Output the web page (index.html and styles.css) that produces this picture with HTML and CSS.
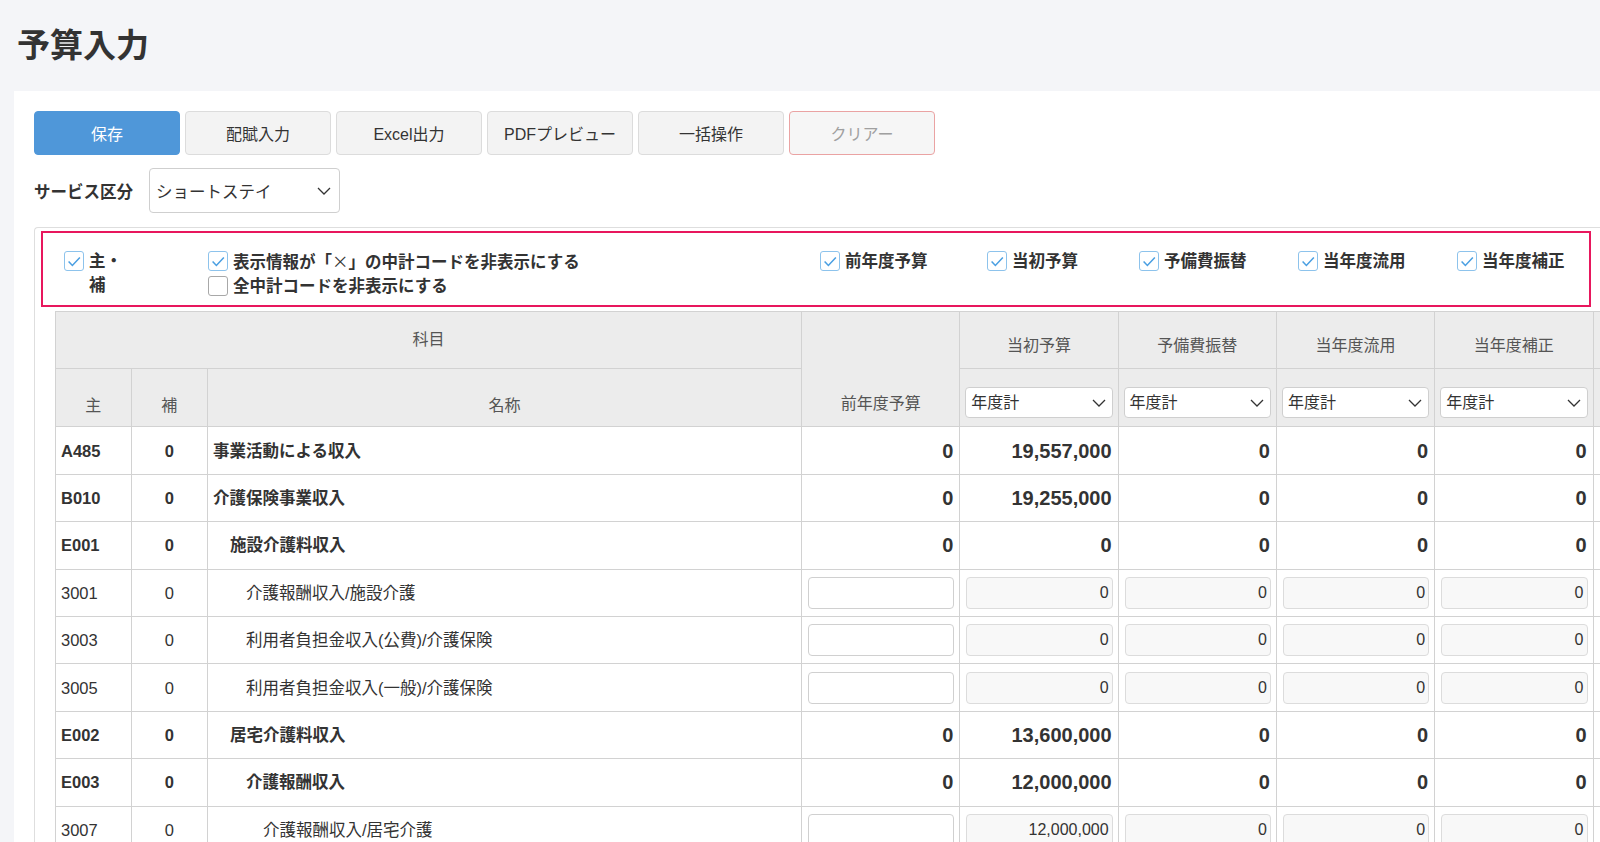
FILE: index.html
```html
<!DOCTYPE html>
<html lang="ja">
<head>
    <meta charset="UTF-8">
    <meta name="viewport" content="width=device-width, initial-scale=1.0">
    <title>予算入力</title>
    <link rel="stylesheet" href="styles.css">
</head>
<body>
    <h1 class="page-title">予算入力</h1>

    <div class="card">
        <div class="toolbar">
            <button class="btn btn-primary">保存</button>
            <button class="btn">配賦入力</button>
            <button class="btn">Excel出力</button>
            <button class="btn">PDFプレビュー</button>
            <button class="btn">一括操作</button>
            <button class="btn btn-clear">クリアー</button>
        </div>

        <div class="service-row">
            <span class="service-label">サービス区分</span>
            <div class="select select-service">
                <span>ショートステイ</span>
                <svg class="chevron" width="14" height="8" viewBox="0 0 14 8"><path d="M1 1 L7 7 L13 1" /></svg>
            </div>
        </div>

        <div class="panel">
            <!-- 表示オプション -->
            <div class="filter-box">
                <label class="check-item">
                    <span class="cb checked"><svg viewBox="0 0 20 20"><path d="M4 10.5 L8.2 15 L16.5 6" /></svg></span>
                    <span class="check-text narrow">主・補</span>
                </label>
                <div class="check-stack">
                    <label class="check-item">
                        <span class="cb checked"><svg viewBox="0 0 20 20"><path d="M4 10.5 L8.2 15 L16.5 6" /></svg></span>
                        <span class="check-text">表示情報が「<span class="wide-x">×</span>」の中計コードを非表示にする</span>
                    </label>
                    <label class="check-item">
                        <span class="cb"></span>
                        <span class="check-text">全中計コードを非表示にする</span>
                    </label>
                </div>
                <label class="check-item">
                    <span class="cb checked"><svg viewBox="0 0 20 20"><path d="M4 10.5 L8.2 15 L16.5 6" /></svg></span>
                    <span class="check-text">前年度予算</span>
                </label>
                <label class="check-item">
                    <span class="cb checked"><svg viewBox="0 0 20 20"><path d="M4 10.5 L8.2 15 L16.5 6" /></svg></span>
                    <span class="check-text">当初予算</span>
                </label>
                <label class="check-item">
                    <span class="cb checked"><svg viewBox="0 0 20 20"><path d="M4 10.5 L8.2 15 L16.5 6" /></svg></span>
                    <span class="check-text">予備費振替</span>
                </label>
                <label class="check-item">
                    <span class="cb checked"><svg viewBox="0 0 20 20"><path d="M4 10.5 L8.2 15 L16.5 6" /></svg></span>
                    <span class="check-text">当年度流用</span>
                </label>
                <label class="check-item">
                    <span class="cb checked"><svg viewBox="0 0 20 20"><path d="M4 10.5 L8.2 15 L16.5 6" /></svg></span>
                    <span class="check-text">当年度補正</span>
                </label>
            </div>

            <table class="budget-table">
                <colgroup>
                    <col class="col-code">
                    <col class="col-sub">
                    <col class="col-name">
                    <col class="col-num">
                    <col class="col-num">
                    <col class="col-num">
                    <col class="col-num">
                    <col class="col-num">
                    <col class="col-num">
                </colgroup>
                <thead>
                    <tr class="head-1">
                        <th colspan="3" class="middle">科目</th>
                        <th rowspan="2">前年度予算</th>
                        <th>当初予算</th>
                        <th>予備費振替</th>
                        <th>当年度流用</th>
                        <th>当年度補正</th>
                        <th></th>
                    </tr>
                    <tr class="head-2">
                        <th>主</th>
                        <th>補</th>
                        <th>名称</th>
                        <th><div class="select select-small"><span>年度計</span><svg class="chevron" width="14" height="8" viewBox="0 0 14 8"><path d="M1 1 L7 7 L13 1" /></svg></div></th>
                        <th><div class="select select-small"><span>年度計</span><svg class="chevron" width="14" height="8" viewBox="0 0 14 8"><path d="M1 1 L7 7 L13 1" /></svg></div></th>
                        <th><div class="select select-small"><span>年度計</span><svg class="chevron" width="14" height="8" viewBox="0 0 14 8"><path d="M1 1 L7 7 L13 1" /></svg></div></th>
                        <th><div class="select select-small"><span>年度計</span><svg class="chevron" width="14" height="8" viewBox="0 0 14 8"><path d="M1 1 L7 7 L13 1" /></svg></div></th>
                        <th></th>
                    </tr>
                </thead>
                <tbody>
                    <tr class="sum">
                        <td>A485</td><td class="c">0</td><td class="name">事業活動による収入</td>
                        <td class="n">0</td><td class="n">19,557,000</td><td class="n">0</td><td class="n">0</td><td class="n">0</td><td></td>
                    </tr>
                    <tr class="sum">
                        <td>B010</td><td class="c">0</td><td class="name">介護保険事業収入</td>
                        <td class="n">0</td><td class="n">19,255,000</td><td class="n">0</td><td class="n">0</td><td class="n">0</td><td></td>
                    </tr>
                    <tr class="sum">
                        <td>E001</td><td class="c">0</td><td class="name lv1">施設介護料収入</td>
                        <td class="n">0</td><td class="n">0</td><td class="n">0</td><td class="n">0</td><td class="n">0</td><td></td>
                    </tr>
                    <tr class="entry">
                        <td>3001</td><td class="c">0</td><td class="name lv2">介護報酬収入/施設介護</td>
                        <td class="i"><input class="num-input" type="text"></td>
                        <td class="i"><input class="num-input" type="text" value="0" readonly></td>
                        <td class="i"><input class="num-input" type="text" value="0" readonly></td>
                        <td class="i"><input class="num-input" type="text" value="0" readonly></td>
                        <td class="i"><input class="num-input" type="text" value="0" readonly></td>
                        <td></td>
                    </tr>
                    <tr class="entry">
                        <td>3003</td><td class="c">0</td><td class="name lv2">利用者負担金収入(公費)/介護保険</td>
                        <td class="i"><input class="num-input" type="text"></td>
                        <td class="i"><input class="num-input" type="text" value="0" readonly></td>
                        <td class="i"><input class="num-input" type="text" value="0" readonly></td>
                        <td class="i"><input class="num-input" type="text" value="0" readonly></td>
                        <td class="i"><input class="num-input" type="text" value="0" readonly></td>
                        <td></td>
                    </tr>
                    <tr class="entry">
                        <td>3005</td><td class="c">0</td><td class="name lv2">利用者負担金収入(一般)/介護保険</td>
                        <td class="i"><input class="num-input" type="text"></td>
                        <td class="i"><input class="num-input" type="text" value="0" readonly></td>
                        <td class="i"><input class="num-input" type="text" value="0" readonly></td>
                        <td class="i"><input class="num-input" type="text" value="0" readonly></td>
                        <td class="i"><input class="num-input" type="text" value="0" readonly></td>
                        <td></td>
                    </tr>
                    <tr class="sum">
                        <td>E002</td><td class="c">0</td><td class="name lv1">居宅介護料収入</td>
                        <td class="n">0</td><td class="n">13,600,000</td><td class="n">0</td><td class="n">0</td><td class="n">0</td><td></td>
                    </tr>
                    <tr class="sum">
                        <td>E003</td><td class="c">0</td><td class="name lv2">介護報酬収入</td>
                        <td class="n">0</td><td class="n">12,000,000</td><td class="n">0</td><td class="n">0</td><td class="n">0</td><td></td>
                    </tr>
                    <tr class="entry">
                        <td>3007</td><td class="c">0</td><td class="name lv3">介護報酬収入/居宅介護</td>
                        <td class="i"><input class="num-input" type="text"></td>
                        <td class="i"><input class="num-input" type="text" value="12,000,000" readonly></td>
                        <td class="i"><input class="num-input" type="text" value="0" readonly></td>
                        <td class="i"><input class="num-input" type="text" value="0" readonly></td>
                        <td class="i"><input class="num-input" type="text" value="0" readonly></td>
                        <td></td>
                    </tr>
                </tbody>
            </table>
        </div>
    </div>
</body>
</html>
```

FILE: styles.css
```css
* {
    margin: 0;
    padding: 0;
    box-sizing: border-box;
}

body {
    font-family: 'Liberation Sans', 'Noto Sans CJK JP', sans-serif;
    background: #f4f5f8;
    color: #333;
    overflow: hidden;
    height: 842px;
}

.page-title {
    font-size: 33px;
    font-weight: bold;
    line-height: 38px;
    padding: 27px 0 0 17px;
    margin-bottom: 26px;
    color: #333;
}

.card {
    background: #fff;
    margin-left: 14px;
    width: 1800px;
    min-height: 800px;
    padding: 20px 0 0 20px;
}

/* ボタン列 */
.toolbar {
    display: flex;
    gap: 5px;
}

.btn {
    width: 146px;
    height: 44px;
    border: 1px solid #dcdcdc;
    border-radius: 4px;
    background: #f3f3f3;
    color: #333;
    font-family: inherit;
    font-size: 16px;
    cursor: pointer;
}

.btn-primary {
    background: #4f97d9;
    border-color: #4f97d9;
    color: #fff;
}

.btn-clear {
    background: #f6f6f6;
    border-color: #eaa3a3;
    color: #a0a0a0;
}

.service-row {
    display: flex;
    align-items: center;
    margin-top: 13px;
}

.service-label {
    font-size: 16.5px;
    font-weight: bold;
    width: 115px;
}

.select {
    display: flex;
    align-items: center;
    justify-content: space-between;
    background: #fff;
    border: 1px solid #cfcfcf;
    border-radius: 4px;
    color: #333;
}

.select-service {
    width: 191px;
    height: 45px;
    padding: 0 8px 0 6px;
    font-size: 16.5px;
}

.chevron path {
    fill: none;
    stroke: #333;
    stroke-width: 1.3;
}

/* 表示オプション + テーブル */
.panel {
    margin-top: 14px;
    border: 1px solid #dedede;
    border-right: none;
    border-radius: 4px 0 0 0;
    padding: 3px 0 0 6px;
}

.filter-box {
    width: 1550px;
    border: 2px solid #e8175d;
    padding: 16px 0 7px 21px;
    display: grid;
    grid-template-columns: 144px 612px 167px 152px 159px 159px auto;
    align-items: start;
}

.check-item {
    display: flex;
    align-items: flex-start;
    gap: 5px;
    font-size: 16.5px;
    font-weight: bold;
    line-height: 24px;
    color: #333;
}

.check-stack {
    display: flex;
    flex-direction: column;
}

.check-text.narrow {
    width: 35px;
}

.wide-x {
    font-family: 'Noto Sans CJK JP', sans-serif;
    font-feature-settings: "fwid";
    font-weight: normal;
}

.cb {
    flex: none;
    width: 20px;
    height: 20px;
    margin-top: 2px;
    border: 1px solid #a8a8a8;
    border-radius: 3px;
    background: #fff;
}

.cb.checked {
    border-color: #8dc3ec;
}

.cb svg {
    display: block;
    width: 18px;
    height: 18px;
}

.cb svg path {
    fill: none;
    stroke: #4a9fe2;
    stroke-width: 1.7;
}

.budget-table {
    margin: 4px 0 0 14px;
    border-collapse: collapse;
    table-layout: fixed;
    width: 1696px;
    font-size: 16.5px;
}

.col-code { width: 75.6px; }
.col-sub { width: 76.4px; }
.col-name { width: 594px; }
.col-num { width: 158.3px; }

.budget-table th,
.budget-table td {
    border: 1px solid #d2d2d2;
}

.budget-table th {
    background: #ececec;
    color: #555;
    font-size: 16px;
    font-weight: normal;
    vertical-align: bottom;
    padding: 0 5px 10px;
    line-height: 24px;
}

.budget-table th.middle {
    vertical-align: middle;
    padding-bottom: 0;
}

.head-1 { height: 57.4px; }
.head-2 { height: 58px; }

.head-2 th {
    padding-bottom: 8px;
}

.select-small {
    height: 31px;
    padding: 0 6px 0 5px;
    font-size: 16px;
    color: #333;
}

.sum, .entry {
    height: 47.4px;
}

.budget-table td {
    padding: 0 5px;
    color: #333;
    white-space: nowrap;
    line-height: 22px;
}

.sum td {
    font-weight: bold;
}

.budget-table td.c {
    text-align: center;
}

.budget-table td.n {
    text-align: right;
    font-size: 20px;
    padding-right: 6px;
}

.budget-table td.name.lv1 { padding-left: 22px; }
.budget-table td.name.lv2 { padding-left: 38px; }
.budget-table td.name.lv3 { padding-left: 55px; }

.budget-table td.i {
    padding: 0 5px 0 6px;
}

.num-input {
    display: block;
    width: 100%;
    height: 32px;
    border: 1px solid #d0d0d0;
    border-radius: 4px;
    background: #fff;
    font-family: inherit;
    font-size: 16px;
    color: #333;
    text-align: right;
    padding: 0 3px 0 5px;
}

.num-input[readonly] {
    background: #f8f8f8;
    border-color: #dcdcdc;
}
```
